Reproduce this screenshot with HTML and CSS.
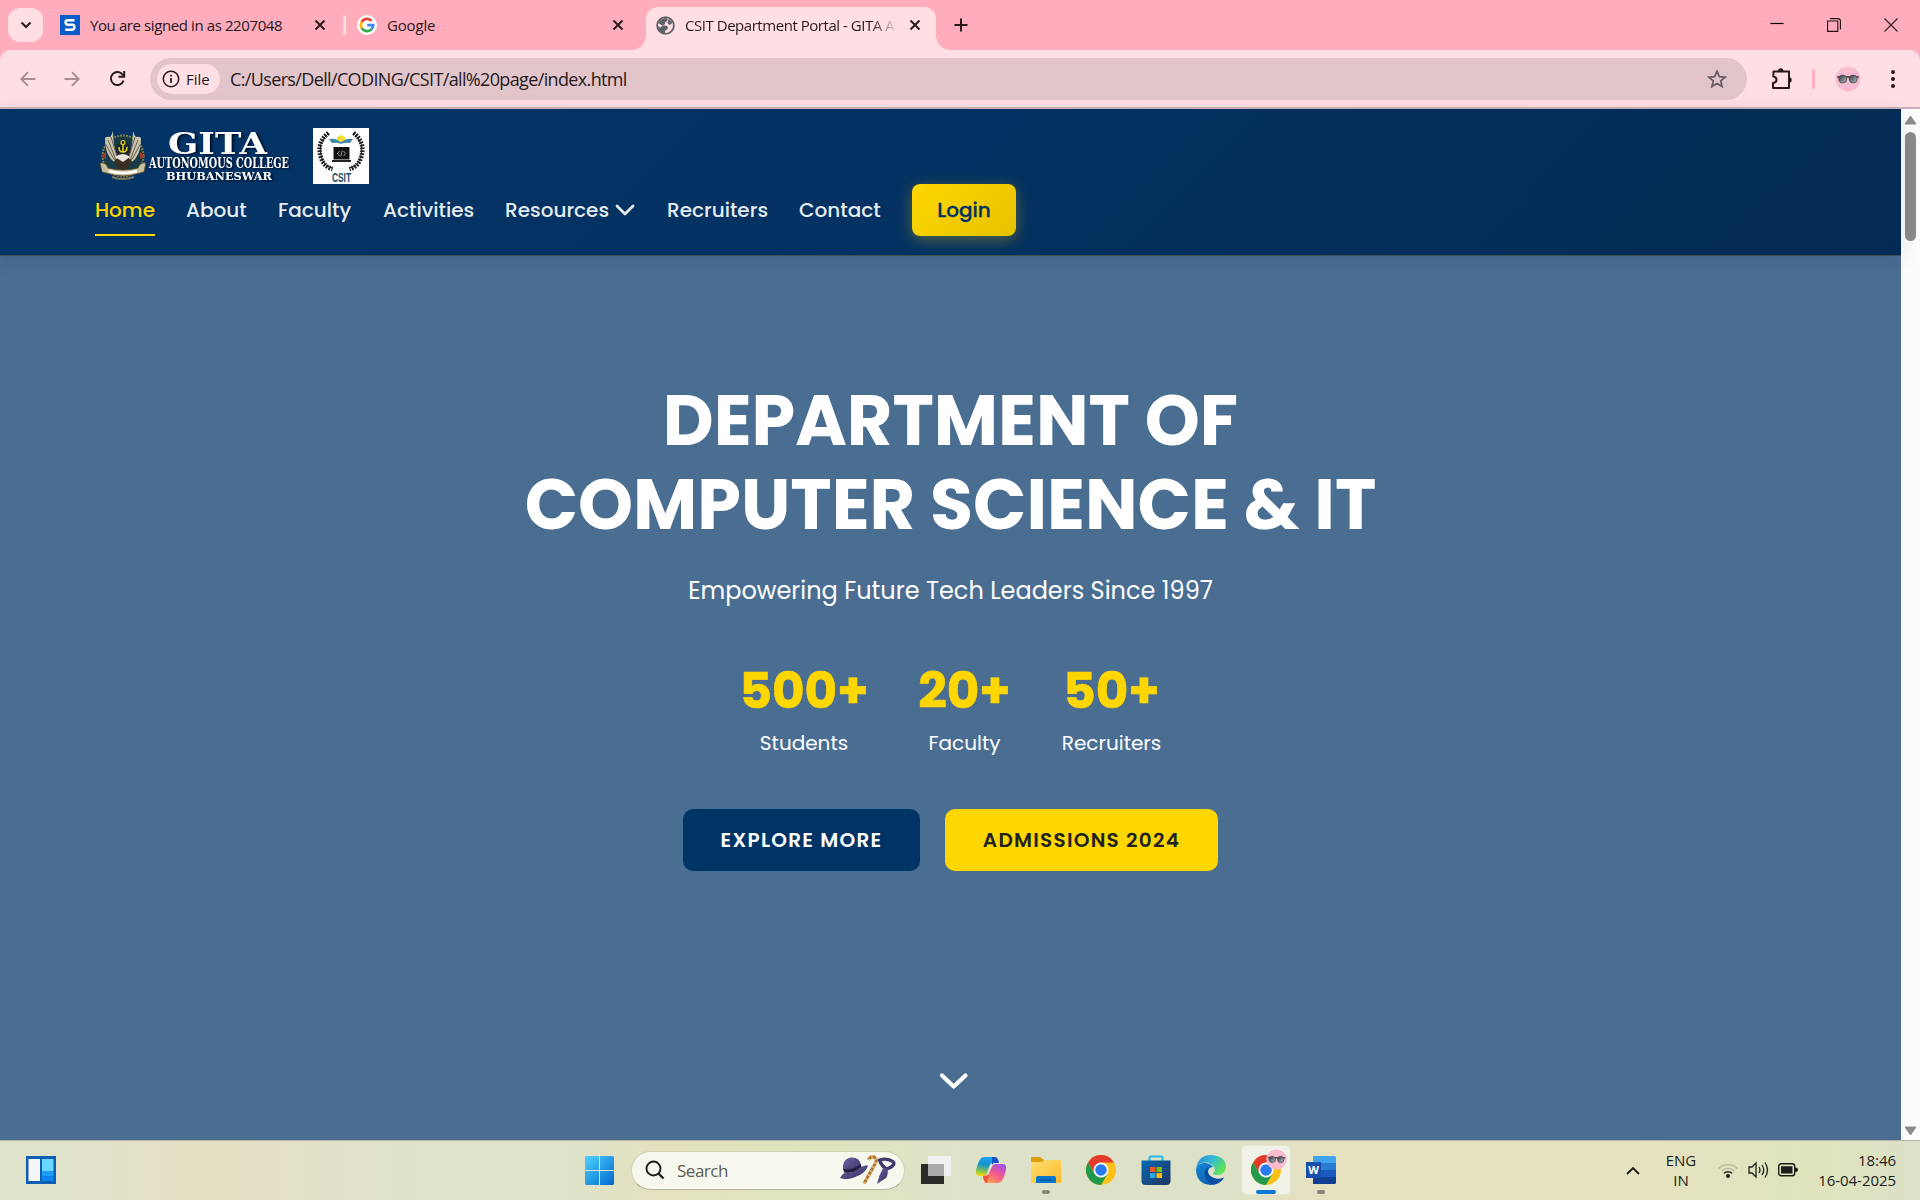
FILE: index.html
```html
<!DOCTYPE html>
<html lang="en">
<head>
<meta charset="utf-8">
<title>CSIT Department Portal - GITA Autonomous College</title>
<link rel="stylesheet" href="styles.css">
</head>
<body>
<svg class="defs" aria-hidden="true">
  <defs>
    <linearGradient id="win" x1="0" y1="0" x2="1" y2="1"><stop offset="0" stop-color="#4fd3ff"/><stop offset="1" stop-color="#0067cf"/></linearGradient>
    <linearGradient id="folder" x1="0" y1="0" x2="1" y2="1"><stop offset="0" stop-color="#ffdf73"/><stop offset="1" stop-color="#fbb92b"/></linearGradient>
    <linearGradient id="store" x1="0" y1="0" x2="1" y2="1"><stop offset="0" stop-color="#0669b4"/><stop offset="1" stop-color="#22355f"/></linearGradient>
    <linearGradient id="edgeTop" x1="0" y1="0" x2="1" y2=".6"><stop offset="0" stop-color="#2186d8"/><stop offset=".5" stop-color="#35b9d4"/><stop offset="1" stop-color="#62e653"/></linearGradient>
    <linearGradient id="edgeLow" x1="0" y1="0" x2="1" y2="1"><stop offset="0" stop-color="#1686d8"/><stop offset="1" stop-color="#0a52a0"/></linearGradient>
    <linearGradient id="copA" x1=".5" y1="0" x2=".3" y2="1"><stop offset="0" stop-color="#18a5f0"/><stop offset=".4" stop-color="#1591cf"/><stop offset=".75" stop-color="#7fc35a"/><stop offset="1" stop-color="#f5d90b"/></linearGradient>
    <linearGradient id="copB" x1=".8" y1="0" x2=".2" y2="1"><stop offset="0" stop-color="#a24fe8"/><stop offset=".5" stop-color="#f3598c"/><stop offset="1" stop-color="#ffa34d"/></linearGradient>
    <linearGradient id="hat" x1="0" y1="0" x2="1" y2="1"><stop offset="0" stop-color="#6f68ab"/><stop offset="1" stop-color="#302b58"/></linearGradient>
    <linearGradient id="lens" x1="0" y1="0" x2="1" y2="1"><stop offset="0" stop-color="#303338"/><stop offset="1" stop-color="#a9c3ca"/></linearGradient>
    <symbol id="chrome" viewBox="0 0 30 30">
      <circle cx="15" cy="15" r="15" fill="#fbc116"/>
      <path d="M2 7.5A15 15 0 0 1 28 7.5H15L8.5 18.7z" fill="#e33b2e"/>
      <path d="M2 7.5A15 15 0 0 0 15 30l6.5-11.2H8.5z" fill="#229a4b"/>
      <circle cx="15" cy="15" r="7.5" fill="#fff"/><circle cx="15" cy="15" r="5.8" fill="#2b7bf0"/>
    </symbol>
    <symbol id="shades" viewBox="0 0 26 26">
      <circle cx="13" cy="13" r="12.5" fill="#f8bbd0"/>
      <path d="M2.2 11h3M20.8 11h3M11 11.500q2-1.500 4 0" fill="none" stroke="#3b2c2c" stroke-width="1.400"/>
      <circle cx="7.800" cy="13" r="4" fill="url(#lens)" stroke="#514347" stroke-width=".8"/><circle cx="18.200" cy="13" r="4" fill="url(#lens)" stroke="#514347" stroke-width=".8"/>
    </symbol>
    <symbol id="x" viewBox="0 0 12 12"><path d="M1.500 1.500l9 9M10.500 1.500l-9 9" fill="none" stroke="#26191c" stroke-width="1.900"/></symbol>
  </defs>
</svg>

<header class="tabstrip">
  <button class="tab-search"><svg width="12" height="8" viewBox="0 0 12 8"><path d="M1.500 1.500L6 6l4.500-4.500" fill="none" stroke="#2a1c1f" stroke-width="2.200"/></svg></button>
  <div class="tab tab-first">
    <svg width="20" height="20" viewBox="0 0 20 20"><path fill="#0b5ccb" d="M0 0h20v20H0z"/><path d="M14.500 5.200H7.500Q5.600 5.200 5.600 7.300T7.500 9.700h5Q14.400 9.700 14.400 12T12.500 14.700H5.200" fill="none" stroke="#fff" stroke-width="2.400"/></svg>
    <span class="tab-title signed">You are signed in as 2207048</span>
    <svg class="close" width="12" height="12"><use href="#x"/></svg>
  </div>
  <i class="tab-divider"></i>
  <div class="tab tab-google">
    <svg width="20" height="20" viewBox="0 0 20 20"><circle cx="10" cy="10" r="10" fill="#fff"/><g fill="none" stroke-width="2.700"><path d="M14.700 5.900A6.200 6.200 0 0 0 4.700 6.900" stroke="#e94235"/><path d="M4.700 6.900a6.200 6.200 0 0 0 0 6.200" stroke="#fabb05"/><path d="M4.700 13.100a6.200 6.200 0 0 0 9.500 1.500" stroke="#34a853"/><path d="M14.200 14.600Q16.200 12.700 16.200 10.200H10.200" stroke="#4285f4"/></g></svg>
    <span class="tab-title google">Google</span>
    <svg class="close" width="12" height="12"><use href="#x"/></svg>
  </div>
  <div class="tab tab-active">
    <svg width="19" height="19" viewBox="0 0 19 19"><circle cx="9.500" cy="9.500" r="8.400" fill="#ffdee4" stroke="#5f6368" stroke-width="1.800"/><path d="M2 7Q5 2 10.500 2L12 4 9 6.500V8L6.500 9.500H10q2 .5 2 3L9 15v2.500Q3 17 1.500 10l3 1.500 2-2z" fill="#5f6368"/><path d="M13 2.500l3.500 4.500-3 2-2-2z" fill="#5f6368"/></svg>
    <span class="tab-title portal">CSIT Department Portal - GITA A</span>
    <svg class="close" width="12" height="12"><use href="#x"/></svg>
  </div>
  <svg class="plus" width="14" height="14" viewBox="0 0 14 14"><path d="M7 .5v13M.5 7h13" stroke="#26191c" stroke-width="2"/></svg>
  <div class="window-controls">
    <svg width="14" height="14" viewBox="0 0 14 14"><path d="M.5 5.500h13" stroke="#000" stroke-width="1.200"/></svg>
    <svg width="14" height="14" viewBox="0 0 14 14"><path d="M.6 3h10.200v10.400H.6zM3 .6h8q2.400 0 2.400 2.400v8.500" fill="none" stroke="#1c1013" stroke-width="1.100"/></svg>
    <svg width="14" height="14" viewBox="0 0 14 14"><path d="M.5.5l13 13M13.500.5l-13 13" stroke="#3a2328" stroke-width="1.200"/></svg>
  </div>
</header>

<div class="toolbar-wrap">
<div class="toolbar">
  <svg class="back" width="16" height="16" viewBox="0 0 16 16"><path d="M15.500 8H1.500M8 1.200L1.300 8 8 14.800" fill="none" stroke="#a58e94" stroke-width="1.900"/></svg>
  <svg class="forward" width="16" height="16" viewBox="0 0 16 16"><path d="M.5 8h14M8 1.200L14.700 8 8 14.800" fill="none" stroke="#a58e94" stroke-width="1.900"/></svg>
  <svg class="reload" width="17" height="17" viewBox="0 0 17 17"><path d="M14.600 10.500A6.500 6.500 0 1 1 14 5.200M15.200 1v5.800H9.500" fill="none" stroke="#26191c" stroke-width="2"/></svg>
  <div class="omnibox">
    <span class="chip"><svg width="18" height="18" viewBox="0 0 18 18"><circle cx="9" cy="9" r="7.700" fill="none" stroke="#26191c" stroke-width="1.500"/><path d="M9 8v5M9 4.800v1.700" stroke="#26191c" stroke-width="1.700"/></svg><span>File</span></span>
    <span class="url">C:/Users/Dell/CODING/CSIT/all%20page/index.html</span>
    <svg class="star" width="20" height="20" viewBox="0 0 20 20"><path d="M10 2.200l2.300 5.400 5.900.5-4.500 3.800 1.400 5.700-5.100-3-5.100 3 1.400-5.700L1.800 8.100l5.900-.5z" fill="none" stroke="#655a5d" stroke-width="1.700"/></svg>
  </div>
  <svg class="puzzle" width="22" height="22" viewBox="0 0 22 22"><path d="M2.500 3.500H18V20H2V15Q5.500 14.500 5.500 11.700T2.300 8.500z" fill="none" stroke="#26191c" stroke-width="2" stroke-linejoin="round"/><path d="M7 3a2.700 2.700 0 0 1 5.400 0zM18 9.200a2.700 2.700 0 0 1 0 5.400z" fill="#26191c"/></svg>
  <i class="profile-divider"></i>
  <svg class="avatar" width="26" height="26"><use href="#shades"/></svg>
  <svg class="dots" width="4" height="18" viewBox="0 0 4 18"><g fill="#26191c"><circle cx="2" cy="2" r="2"/><circle cx="2" cy="9" r="2"/><circle cx="2" cy="16" r="2"/></g></svg>
</div>
</div>

<div class="viewport">
  <div class="page">
    <header class="site-header">
      <div class="logos">
        <svg class="logo-gita" width="206" height="56" viewBox="0 0 206 56" role="img">
          <g transform="translate(5 2)">
            <circle cx="23" cy="26" r="20.500" fill="#173b48" stroke="#857c47" stroke-width="2" stroke-dasharray="2 1"/>
            <path d="M23 10q-8 2-8 14l8 9 8-9q0-12-8-14z" fill="#1c2631"/>
            <path d="M13 1q-1 4-3 6-3-1-5 1 0 12 4 18 3 6 9 7l-1-8Q13 16 13 1zM33 1q1 4 3 6 3-1 5 1 0 12-4 18-3 6-9 7l1-8Q33 16 33 1z" fill="#c9c3ae"/>
            <path d="M11 7l7 23M8 10l8 20M5.500 14l9 16M35 7l-7 23M38 10l-8 20M40.500 14l-9 16" stroke="#5b5344" stroke-width=".9"/>
            <path d="M14 31q9-9 18 0l-5 9h-8z" fill="#3a2e22"/><path d="M15 27q8-6 15 0l-7 5z" fill="#e8e4d7"/>
            <circle cx="23" cy="12.500" r="2" fill="none" stroke="#e3d324" stroke-width="1.200"/><path d="M23 14v8M19 17q0 5 4 5t4-5" fill="none" stroke="#e3d324" stroke-width="1.500"/>
            <path d="M40 22l5 4-5 3zM6 22l-5 4 5 3z" fill="#a63a27"/>
            <path d="M0 33q6-1 8 5 15 4 30 0 2-6 8-5l-2 9-4 1q-17 6-34 0l-4-1z" fill="#c8bfa1" stroke="#51431f" stroke-width=".8"/>
            <path d="M9 41q14 4 28 0" fill="none" stroke="#fff" stroke-width="2.500"/>
            <path d="M12 47q11 4 22 0" fill="none" stroke="#827b52" stroke-width="2"/>
          </g>
          <g class="logo-text">
            <text x="73" y="26" font-size="30.500" textLength="99" lengthAdjust="spacingAndGlyphs">GITA</text>
            <text x="54" y="40" font-size="14.700" textLength="140" lengthAdjust="spacingAndGlyphs">AUTONOMOUS COLLEGE</text>
            <text x="71" y="51.700" font-size="11" textLength="106" lengthAdjust="spacingAndGlyphs">BHUBANESWAR</text>
          </g>
        </svg>
        <svg class="logo-csit" width="56" height="56" viewBox="0 0 56 56" role="img">
          <path fill="#fff" d="M0 0h56v56H0z"/>
          <g fill="none" stroke="#1b1b1b"><path d="M16 5Q3 15 9 31q3 8 11 9" stroke-width="1"/><path d="M15.500 5Q2.500 15 8.500 31q3 8 11 10" stroke-width="4.500" stroke-dasharray="1.700 1.200"/><path d="M40 5q13 10 7 26-3 8-11 9" stroke-width="1"/><path d="M40.500 5q13 10 7 26-3 8-11 10" stroke-width="4.500" stroke-dasharray="1.700 1.200"/></g>
          <path d="M16 11q7-1 12 3 5-4 12-3l-3 4q-6-1-9 1-3-2-9-1z" fill="#3f86ac"/><path d="M24 9l4-2 4 2v3l-4 2-4-2z" fill="#f0dc35"/>
          <path d="M20.500 19h16v12.500h-16z" fill="#121212"/><path d="M19 32h19v2H19z" fill="#222"/>
          <path d="M26.500 23l-2 2.500 2 2.500M30.500 23l2 2.500-2 2.500M29.200 22.500l-1.400 6" fill="none" stroke="#b8b8b8" stroke-width=".8"/>
          <text x="19" y="54" class="csit" textLength="19" lengthAdjust="spacingAndGlyphs">CSIT</text>
        </svg>
      </div>
      <nav class="site-nav">
        <a class="home current">Home</a>
        <a class="about">About</a>
        <a class="faculty">Faculty</a>
        <a class="activities">Activities</a>
        <a class="resources">Resources<svg width="20" height="12" viewBox="0 0 20 12"><path d="M2 2l8 8 8-8" fill="none" stroke="#e6ebf0" stroke-width="2.800" stroke-linecap="round" stroke-linejoin="round"/></svg></a>
        <a class="recruiters">Recruiters</a>
        <a class="contact">Contact</a>
        <a class="login">Login</a>
      </nav>
    </header>
    <main class="hero">
      <h1><span>DEPARTMENT OF</span><span>COMPUTER SCIENCE &amp; IT</span></h1>
      <p class="tagline">Empowering Future Tech Leaders Since 1997</p>
      <div class="stats">
        <div class="stat s-students"><b>500+</b><span>Students</span></div>
        <div class="stat s-faculty"><b>20+</b><span>Faculty</span></div>
        <div class="stat s-recruiters"><b>50+</b><span>Recruiters</span></div>
      </div>
      <div class="actions"><a class="btn explore">EXPLORE MORE</a><a class="btn admissions">ADMISSIONS 2024</a></div>
      <svg class="scroll-cue" width="30" height="18" viewBox="0 0 30 18"><path d="M3 3.500l11.700 11L26.500 3.500" fill="none" stroke="#fff" stroke-width="4.200" stroke-linecap="round" stroke-linejoin="round"/></svg>
    </main>
  </div>
  <div class="scrollbar">
    <svg width="13" height="10" viewBox="0 0 13 10"><path d="M6.500 1l5.500 8H1z" fill="#8b8b8b" stroke="#8b8b8b" stroke-linejoin="round"/></svg>
    <i class="thumb"></i>
    <svg class="down" width="13" height="10" viewBox="0 0 13 10"><path d="M6.500 9L1 1h11z" fill="#8b8b8b" stroke="#8b8b8b" stroke-linejoin="round"/></svg>
  </div>
</div>

<footer class="taskbar">
  <svg class="widgets" width="30" height="28" viewBox="0 0 30 28"><path d="M0 0h30v28H0z" fill="#0e5fb4"/><path d="M2.500 3H14v22H2.500z" fill="#f5f6f8"/><path d="M16 3h11.500v12H16z" fill="#68d8ff"/><path d="M16 15h11.500v5.500H16z" fill="#1b9cf7"/><path d="M16 20.500h11.500V25H16z" fill="#0a84f0"/></svg>
  <div class="apps">
    <span class="slot"><svg width="29" height="29" viewBox="0 0 29 29"><path d="M1 0h13v14H0V1zM15 0h13l1 1v13H15zM0 15h14v14H1l-1-1zM15 15h14v13l-1 1H15z" fill="url(#win)"/></svg></span>
    <div class="search">
      <svg width="20" height="20" viewBox="0 0 20 20"><circle cx="8.500" cy="8.500" r="7" fill="none" stroke="#1d1d1b" stroke-width="1.900"/><path d="M13.500 13.500l5 5" stroke="#1d1d1b" stroke-width="2.400"/></svg>
      <span>Search</span>
      <svg class="doodle" width="57" height="30" viewBox="0 0 57 30">
        <path d="M3 15Q2 3 12 2.500q8 0 9 8l-6 7z" fill="url(#hat)"/><path d="M3.500 14q9 2 17.500-5l.5 3.500q-9 7-17.500 5z" fill="#221f3d"/><path d="M0 23q1-3 5-5.500 9 1 16-5.500 7-3 7-1-3 8-14 11.500-9 3-14 .5z" fill="url(#hat)"/>
        <path d="M24 28.500L35 9q3-5-1-7-4-1-5.500 3" fill="none" stroke="#b37533" stroke-width="3.200"/><path d="M24 28.500L35 9q3-5-1-7-4-1-5.500 3" fill="none" stroke="#e4bd83" stroke-width="3.200" stroke-dasharray="1.500 3"/>
        <path d="M39.500 5q8-2.500 14 2 2 4-7 7-5-3-7-9z" fill="none" stroke="#3f3970" stroke-width="3.400" stroke-linejoin="round"/><path d="M43 13q-4 7-6 16l9-6q3-5 1-10z" fill="url(#hat)"/>
      </svg>
    </div>
    <span class="slot"><svg width="30" height="29" viewBox="0 0 30 29"><path d="M0 8h23v20H0z" fill="#2b2b2a"/><path d="M7 0h23v20H7z" fill="#f1f1f1"/><path d="M7 8h16v12H7z" fill="#aaa"/></svg></span>
    <span class="slot"><svg width="30" height="28" viewBox="0 0 30 28"><path d="M8 1h10q3 0 4 5l-5 1q-3 0-4 4l-2 6q-1 3-4 3H3q-4 0-3-6Q3 1 8 1z" fill="url(#copA)"/><path d="M16 1h3q3 0 4 6h-5q-1 0-2 2z" fill="#1453c5"/><path d="M22 27H11q-3 0-4-5 4 0 6-5l3-6q1-3 4-3h7q4 0 3 6-3 13-8 13z" fill="url(#copB)"/><path d="M7 20l6-1-2 8q-3 0-4-7z" fill="#ee5237"/></svg></span>
    <span class="slot"><svg width="30" height="27" viewBox="0 0 30 27"><path d="M0 1q0-1 1-1h8l4 3v5H0z" fill="#dfa00d"/><path d="M0 5h11l3-2h15l1 1v22H0z" fill="url(#folder)"/><path d="M5 26v-5q0-2 2-2h16q2 0 2 2v5z" fill="#0876c9"/><path d="M9 23h12" stroke="#064f98" stroke-width="1.200"/></svg><i class="mark"></i></span>
    <span class="slot"><svg width="30" height="30"><use href="#chrome"/></svg></span>
    <span class="slot"><svg width="30" height="30" viewBox="0 0 30 30"><path d="M8.500 7V2.500Q8.500 1.500 10 1.500h10q1.500 0 1.500 1V7" fill="none" stroke="#27b7ed" stroke-width="2"/><path d="M.5 5.500h29V26q0 4-4 4h-21q-4 0-4-4z" fill="url(#store)"/><path d="M9 12h5.500v5H9z" fill="#f35325"/><path d="M15.500 12H21v5h-5.500z" fill="#81bc06"/><path d="M9 18h5.500v5H9z" fill="#27a9ef"/><path d="M15.500 18H21v5h-5.500z" fill="#ffba08"/></svg></span>
    <span class="slot"><svg width="30" height="30" viewBox="0 0 30 30"><path d="M0 14Q2 0 15 0q15 1 15 12-1 8-9 8-4 0-4-2 3-2 1-6Q13 6 6 8 2 9 0 14z" fill="url(#edgeTop)"/><path d="M0 14Q2 7 10 8q5 1 7 4-5 0-5 6 1 7 9 7 4 0 7-2-5 7-13 7Q0 29 0 14z" fill="url(#edgeLow)"/><path d="M12 12q-5 4-3 9 2 7 9 8.500 6-1 10-7-4 2-8 1-7-2-8-6z" fill="#0b4fa0"/></svg></span>
    <span class="slot active"><svg width="30" height="30"><use href="#chrome"/></svg><svg class="badge" width="21" height="21" viewBox="0 0 26 26"><use href="#shades" width="26" height="26"/></svg><i class="mark running"></i></span>
    <span class="slot"><svg width="30" height="28" viewBox="0 0 30 28"><path d="M7 0h22l1 1v6H7z" fill="#41a5ee"/><path d="M7 7h23v7H7z" fill="#2b7cd3"/><path d="M7 14h23v7H7z" fill="#185abd"/><path d="M7 21h23v6l-1 1H7z" fill="#103f91"/><path d="M0 6h15v16H0z" fill="#174fae"/><text x="7.500" y="18" class="word">W</text></svg><i class="mark"></i></span>
  </div>
  <div class="tray">
    <svg class="up" width="14" height="9" viewBox="0 0 14 9"><path d="M1 8l6-6 6 6" fill="none" stroke="#1d1d1b" stroke-width="1.900"/></svg>
    <div class="lang"><span>ENG</span><span>IN</span></div>
    <svg class="wifi" width="20" height="16" viewBox="0 0 20 16"><path d="M.8 6.500a13 13 0 0 1 18.400 0M3.600 9a9 9 0 0 1 12.800 0" fill="none" stroke="#b6b69e" stroke-width="1.300"/><path d="M6 11.300a5.800 5.800 0 0 1 8 0" fill="none" stroke="#1d1d1b" stroke-width="1.500"/><circle cx="10" cy="14" r="2" fill="#1d1d1b"/></svg>
    <svg class="volume" width="21" height="18" viewBox="0 0 21 18"><path d="M1 6h3l4-4v14l-4-4H1zM11 6q2 3 0 6M14 4q3.500 5 0 10M17 1.500q5 7.500 0 15" fill="none" stroke="#1d1d1b" stroke-width="1.300"/></svg>
    <svg class="battery" width="20" height="14" viewBox="0 0 20 14"><rect x=".7" y=".8" width="16" height="12" rx="2.500" fill="none" stroke="#1d1d1b" stroke-width="1.400"/><path d="M3 3.200h11.500v7.200H3zM17 4.500q3 0 3 2.300T17 9z" fill="#1d1d1b"/></svg>
    <div class="clock"><span>18:46</span><span>16-04-2025</span></div>
  </div>
</footer>
</body>
</html>
```
FILE: styles.css
```css
* { box-sizing: border-box; }
body { margin: 0; width: 1920px; height: 1200px; overflow: hidden; display: flex; flex-direction: column; font-family: "Open Sans", sans-serif; color: #26191c; }
svg { display: block; flex: none; }
.defs { position: absolute; width: 0; height: 0; }
a { text-decoration: none; }

/* Browser tabs */
.tabstrip { height: 50px; background: #ffacbc; display: flex; align-items: center; padding-left: 8px; }
.tab-search { width: 35px; height: 34px; padding: 0; border: 0; border-radius: 12px; background: #ffdee4; display: flex; align-items: center; justify-content: center; }
.tab { display: flex; align-items: center; font-size: 15px; white-space: nowrap; }
.tab .close { margin-left: auto; }
.tab-first { width: 266px; margin-left: 17px; gap: 10px; }
.tab-title.signed { letter-spacing: -.4px; }
.tab-title.google { letter-spacing: -.18px; }
.tab-divider { width: 3px; height: 20px; margin-left: 17px; border-radius: 2px; background: #ffdee4; }
.tab-google { width: 267px; margin-left: 11px; gap: 10px; }
.tab-active { position: relative; width: 290px; height: 43px; align-self: flex-end; margin-left: 22px; padding: 0 15px 7px 10px; border-radius: 12px 12px 0 0; background: #ffdee4; gap: 10px; }
.tab-active::before, .tab-active::after { content: ""; position: absolute; bottom: 0; width: 14px; height: 14px; }
.tab-active::before { left: -14px; background: radial-gradient(circle at 0 0, transparent 13.5px, #ffdee4 14px); }
.tab-active::after { right: -14px; background: radial-gradient(circle at 100% 0, transparent 13.5px, #ffdee4 14px); }
.portal { letter-spacing: -.46px; width: 211px; overflow: hidden; mask-image: linear-gradient(90deg, #000 185px, transparent 213px); }
.plus { margin-left: 18px; }
.window-controls { margin-left: auto; display: flex; gap: 43px; padding-right: 22px; }

/* Browser toolbar */
.toolbar-wrap { background: #ffacbc; }
.toolbar { height: 59px; border-bottom: 2px solid #c9b0ba; border-radius: 10px 10px 0 0; background: #ffdee4; display: flex; align-items: center; padding-left: 20px; }
.forward { margin-left: 28px; }
.reload { margin-left: 29px; }
.omnibox { width: 1597px; height: 42px; margin-left: 24px; border-radius: 21px; background: #e1c5ca; display: flex; align-items: center; padding: 0 20px 0 7px; }
.chip { width: 63px; height: 30px; border-radius: 15px; background: #ffdee4; display: flex; align-items: center; gap: 6px; padding-left: 5px; font-size: 15px; }
.url { margin-left: 10px; font-size: 18px; letter-spacing: -.64px; }
.star { margin-left: auto; }
.puzzle { margin-left: 24px; }
.profile-divider { width: 3px; height: 20px; margin-left: 19px; border-radius: 2px; background: #ffacbc; }
.avatar { margin-left: 20px; }
.dots { margin-left: 30px; }

/* Document area */
.viewport { height: 1031px; display: flex; }
.page { width: 1901px; display: flex; flex-direction: column; font-family: Poppins, Inter, sans-serif; }
.site-header { position: relative; z-index: 1; height: 147px; padding: 19px 95px; border-bottom: 1px solid #3c504d; background: linear-gradient(135deg, #043467, #043161 50%, #032a53); box-shadow: 0 4px 20px rgba(0, 0, 0, .1); }
.logos { height: 56px; display: flex; gap: 12px; }
.logo-gita { overflow: visible; }
.logo-text { font-family: "DejaVu Serif", serif; font-weight: 700; fill: #fff; filter: drop-shadow(2px 1px 1px #001027); }
.csit { font: 700 12px "Liberation Sans", sans-serif; fill: #174b68; }
.site-nav { height: 52px; display: flex; gap: 31px; font-size: 20px; font-weight: 500; color: #e6ebf0; }
.site-nav a { height: 52px; display: flex; align-items: center; white-space: nowrap; }
.site-nav .home { width: 60px; }
.site-nav .current { color: #ffd700; padding-top: 2px; border-bottom: 2px solid #ffd700; }
.site-nav .about { width: 61px; }
.site-nav .faculty { width: 74px; }
.site-nav .activities { width: 91px; }
.site-nav .resources { width: 131px; padding-right: 1px; justify-content: space-between; }
.site-nav .recruiters { width: 101px; }
.site-nav .contact { width: 82px; }
.site-nav .login { width: 104px; justify-content: center; border-radius: 8px; background: linear-gradient(135deg, #ffd700, #e6c200); color: #003366; box-shadow: 0 4px 15px rgba(255, 215, 0, .3); -webkit-text-stroke: .3px #003366; }
.hero { flex: 1; background: #4a6d92; display: flex; flex-direction: column; align-items: center; padding-top: 123px; color: #fff; }
h1 { margin: 0; font-size: 70px; line-height: 84px; font-weight: 700; display: flex; flex-direction: column; align-items: center; }
.tagline { margin: 26px 0 0; font-size: 24px; line-height: 36px; }
.stats { margin: 52px 0 0 1px; display: flex; gap: 50px; }
.stat { display: flex; flex-direction: column; align-items: center; }
.stat b { font-size: 50px; line-height: 60px; font-weight: 700; color: #ffd700; -webkit-text-stroke: .6px #ffd700; }
.stat span { margin-top: 7px; font-size: 20px; line-height: 30px; font-weight: 400; }
.s-students { width: 127px; }
.s-faculty { width: 94px; }
.s-recruiters { width: 100px; }
.actions { margin-top: 51px; display: flex; gap: 25px; }
.btn { height: 62px; border-radius: 10px; display: flex; align-items: center; justify-content: center; font-size: 20px; font-weight: 600; letter-spacing: 1.25px; }
.explore { width: 237px; background: #003366; }
.admissions { width: 273px; background: #ffd700; color: #222; }
.scroll-cue { margin: 201px 0 0 7px; }
.scrollbar { width: 19px; background: #fcfcfc; display: flex; flex-direction: column; align-items: center; padding: 6px 0 4px; }
.thumb { width: 11px; height: 109px; margin-top: 7px; border-radius: 6px; background: #8b8b8b; }
.scrollbar .down { margin-top: auto; }

/* Taskbar */
.taskbar { height: 60px; border-top: 1px solid #b5b5a5; padding-bottom: 1px; background: linear-gradient(90deg, #dde3cb 0, #e5dfc3 210px, #dee2ca 420px, #dde2c8 570px, #e4e1bf 660px, #dfe5bc 800px, #dde2c8 950px, #dce1c8 1200px, #e5e1bf 1330px, #e6e2c0 1620px, #dfe4bd 1800px, #dce1c8 1920px); display: flex; align-items: center; }
.widgets { margin-left: 26px; }
.apps { margin-left: 519px; display: flex; align-items: center; gap: 7px; }
.slot { position: relative; width: 48px; height: 48px; border-radius: 5px; display: flex; align-items: center; justify-content: center; }
.search { width: 274px; height: 39px; margin-left: 1px; border: 1px solid #d0d2b5; border-bottom-color: #b3b59d; border-radius: 20px; background: #f7f8ed; display: flex; align-items: center; padding: 0 7px 0 13px; font-size: 17px; letter-spacing: -.48px; color: #5b5b57; }
.search span { margin-left: 12px; }
.doodle { margin-left: auto; }
.active { background: #f1f2e6; box-shadow: 0 0 0 1px #e4e6d4; }
.badge { position: absolute; right: 3px; top: 3px; }
.mark { position: absolute; left: 20px; bottom: 0; width: 8px; height: 4px; border-radius: 2px; background: #858674; }
.running { left: 14px; width: 20px; background: #0f78d4; }
.word { font: 700 11px "Open Sans", sans-serif; fill: #fff; text-anchor: middle; }
.tray { margin-left: auto; padding-right: 24px; display: flex; align-items: center; font-size: 15px; line-height: 20px; color: #1d1d1b; white-space: nowrap; }
.lang { width: 32px; margin-left: 25px; display: flex; flex-direction: column; align-items: center; }
.wifi { margin-left: 21px; }
.volume { margin-left: 10px; }
.battery { margin-left: 9px; }
.clock { width: 78px; margin-left: 20px; display: flex; flex-direction: column; align-items: flex-end; letter-spacing: -.05px; }
```
